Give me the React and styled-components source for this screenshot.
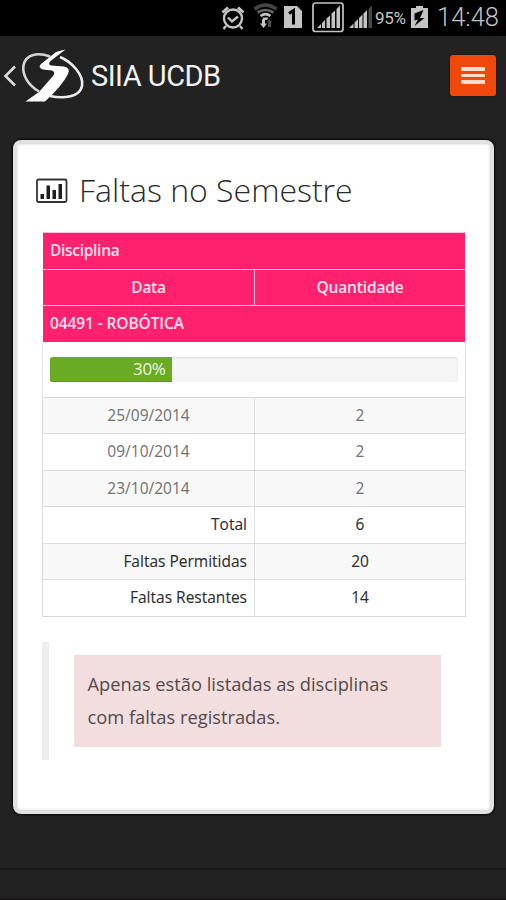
import React from 'react';
import styled, { createGlobalStyle } from 'styled-components';

const Global = createGlobalStyle`
  * { box-sizing: border-box; }
  body { margin: 0; background: #222; font-family: "Open Sans", "Noto Sans", sans-serif; }
`;

const Screen = styled.div`
  width: 506px;
  height: 900px;
  display: flex;
  flex-direction: column;
  overflow: hidden;
  background: #222;
`;

const StatusBar = styled.div`
  height: 36px;
  flex: none;
  background: #000;
  display: flex;
  justify-content: flex-end;
  padding-right: 13px;
  color: #c4c4c4;
  font-family: Roboto, sans-serif;
`;

const StatusIcons = styled.svg`
  width: 154px;
  height: 36px;
  flex: none;
`;

const BatteryLevel = styled.span`
  width: 36px;
  font-size: 17px;
  line-height: 37px;
  letter-spacing: -0.3px;
  white-space: nowrap;
`;

const BatteryIcon = styled.svg`
  width: 18px;
  height: 36px;
  flex: none;
`;

const Clock = styled.span`
  width: 64px;
  padding-left: 8px;
  flex: none;
  font-size: 25.5px;
  line-height: 35px;
  font-weight: 300;
  white-space: nowrap;
`;

const Header = styled.header`
  height: 104px;
  flex: none;
  display: flex;
  align-items: flex-start;
  justify-content: space-between;
  padding: 8px 10px 0 0;
`;

const Brand = styled.div`
  display: flex;
`;

const BrandMark = styled.svg`
  width: 91px;
  height: 64px;
  flex: none;
`;

const BrandName = styled.span`
  color: #f2f2f2;
  font-family: Roboto, sans-serif;
  font-size: 29px;
  line-height: 65px;
  letter-spacing: -0.5px;
  white-space: nowrap;
`;

const MenuButton = styled.button`
  width: 46px;
  height: 41px;
  margin-top: 11px;
  padding: 0;
  border: 0;
  border-radius: 3px;
  background: #f0470a;
  box-shadow: 0 0 2px #07161a;
  display: flex;
  flex-direction: column;
  align-items: center;
  justify-content: center;
  gap: 3px;
`;

const MenuBar = styled.span`
  width: 24px;
  height: 3.4px;
  border-radius: 1px;
  background: #ffdccb;
`;

const Card = styled.main`
  height: 674px;
  flex: none;
  margin: 0 12px 0 13px;
  padding: 26px 24px 0 25px;
  border: 4px solid #e1e1e1;
  border-radius: 8px;
  background: #fff;
  box-shadow: 0 0 2px 1px #060606, inset 0 0 2px 1px #eaeaea;
`;

const Title = styled.h1`
  display: flex;
  align-items: center;
  height: 38px;
  margin: 0 0 24px -6px;
  color: #2b2b2b;
  font-size: 32px;
  font-weight: 300;
  white-space: nowrap;
`;

const ChartIcon = styled.svg`
  width: 32px;
  height: 26px;
  margin: 3px 11px 0 0;
  flex: none;
`;

const Table = styled.div`
  width: 424px;
  border-bottom: 1px solid #d9d9d9;
  font-size: 15.5px;
`;

const HeadRow = styled.div`
  display: grid;
  grid-template-columns: ${p => (p.$split ? '211px 1fr' : '1fr')};
  width: 422px;
  margin-left: 1px;
  height: 36.5px;
  border-top: 1px solid #ffc0d8;
  background: #ff216e;
  color: #ffe3ee;
  line-height: 34px;
  font-weight: 600;
`;

const HeadCell = styled.div`
  padding: 0 7px;
  text-align: ${p => p.$align || 'center'};
  letter-spacing: ${p => p.$spacing || '-0.3px'};
  & + & { border-left: 1px solid #ffc0d8; }
`;

const ProgressRow = styled.div`
  height: 55px;
  padding: 15px 7px 0;
  border: solid #e6e6e6;
  border-width: 0 1px;
`;

const Track = styled.div`
  height: 25px;
  border-radius: 3px;
  background: #f5f5f5;
  box-shadow: inset 0 1px 2px #dedede;
`;

const Fill = styled.div`
  height: 25px;
  padding-right: 7px;
  border-radius: 3px 0 0 3px;
  background: #69ab22;
  box-shadow: inset 0 -1px 0 #5b971b;
  color: #f0f7e4;
  font-size: 17px;
  line-height: 24px;
  letter-spacing: -0.4px;
  text-align: right;
`;

const Row = styled.div`
  display: grid;
  grid-template-columns: 211px 1fr;
  height: 36.6px;
  border: solid #dcdcdc;
  border-width: 1px 1px 0;
  background: ${p => (p.$shaded ? '#f8f8f8' : '#fff')};
  color: ${p => (p.$summary ? '#2e2e2e' : '#707070')};
  line-height: 35px;
`;

const Cell = styled.div`
  padding: 0 7px;
  text-align: ${p => p.$align || 'center'};
  -webkit-text-stroke: ${p => (p.$strong ? '0.1px #2e2e2e' : '0')};
  & + & { border-left: 1px solid #e2e2e2; }
`;

const Quote = styled.blockquote`
  height: 118px;
  margin: 25px 0 0;
  padding: 13px 25px 0 25px;
  border-left: 7px solid #eee;
`;

const Notice = styled.p`
  width: 367px;
  height: 92px;
  margin: 0 0 0 -0.5px;
  padding: 12px 14px;
  background: #f2dede;
  color: #544a4c;
  font-size: 18.3px;
  line-height: 33px;
  white-space: nowrap;
`;

const Footer = styled.footer`
  margin-top: 54px;
  height: 32px;
  border-top: 2px solid #1c1c1c;
  border-bottom: 2px solid #1b1719;
`;

const absences = [
  ['25/09/2014', 2],
  ['09/10/2014', 2],
  ['23/10/2014', 2],
];
const totals = [
  ['Total', 6],
  ['Faltas Permitidas', 20],
  ['Faltas Restantes', 14],
];
const percent = 30;

function StatusArea() {
  return (
    <StatusBar>
      <StatusIcons viewBox="221 0 154 36">
        <g fill="none" stroke="#c4c4c4" strokeWidth="2.4">
          <circle cx="233" cy="18.5" r="9" />
          <path d="M228 17.5l4 4 6-5M226 26l-2.5 3M240 26l2.5 3" />
          <path d="M222.5 12.5l5.5-5M238 7.5l5.5 5" strokeWidth="3" />
        </g>
        <g fill="none">
          <path d="M254.5 9q11-8 22 0" stroke="#454545" strokeWidth="3.5" />
          <path d="M257.5 12.5q8-5 16 0" stroke="#666" strokeWidth="2.7" />
          <path d="M260.5 16q5-3.8 10 0" stroke="#c4c4c4" strokeWidth="2.6" />
        </g>
        <path d="M262.5 17.5h6L267 20h-3z" fill="#c4c4c4" />
        <path d="M260 23.5h2V19h3v4.5h2L263.5 28z" fill="#c4c4c4" />
        <path d="M266.5 22.5l3-3 3 3h-1.5V27h-3v-4.5z" fill="#4d4d4d" />
        <path d="M284 6h13l5 5v17h-18z" fill="#c4c4c4" />
        <path d="M289 13.5l4.500-3v14" fill="none" stroke="#000" strokeWidth="3" />
        <rect x="313" y="3" width="30" height="28.5" rx="2.5" fill="none" stroke="#c4c4c4" strokeWidth="1.7" />
        <g fill="#c4c4c4">
          <path d="M317 28l4-4v4zM322 28v-5l3-3v8zM326.5 28v-9.5l3.500-3V28zM331.5 28V13.500l3.500-3V28zM336.500 28V9l3.500-3.500V28z" />
          <path d="M349 28l4.500-4.500V28zM354.500 28v-5.500l3.500-3.500v9zM359 28V18l3.500-3.500V28zM363.500 28V13.500l3.500-3.500v18z" />
        </g>
        <path d="M368.500 28V9l3.500-3.500V28z" fill="#484848" />
      </StatusIcons>
      <BatteryLevel>95%</BatteryLevel>
      <BatteryIcon viewBox="411 0 18 36">
        <path d="M411 8h5V6h7v2h5v20h-17z" fill="#c4c4c4" />
        <path d="M423.500 10l-9 3.500v7l3.500-1-3.500 6.500 10-8h-4.500z" fill="#000" />
      </BatteryIcon>
      <Clock>14:48</Clock>
    </StatusBar>
  );
}

export default function App() {
  return (
    <Screen>
      <Global />
      <StatusArea />
      <Header>
        <Brand>
          <BrandMark viewBox="0 44 91 64">
            <path d="M15 66.5L5.5 76l9.500 9.500" fill="none" stroke="#ddd" strokeWidth="2.6" />
            <g fill="none" strokeWidth="2.6">
              <path d="M50 56.500C38 52 26 54 23.500 65C22 75 28 85 39 91.500" stroke="#d5d5d5" />
              <path d="M60 57C72 62 84 75 82 86C80 97 64 99 50 96" stroke="#eee" />
            </g>
            <path fill="#fff" d="M56 52Q60 50.500 65.500 49.500L50.500 61Q47.500 64.500 51 65.500L64 66.500Q71 68 68 74Q62 86 45 101.500H25.500L39 92L53 76Q56 72 52 70.500L43 69.500Q37.500 67.500 41 64z" />
          </BrandMark>
          <BrandName>SIIA UCDB</BrandName>
        </Brand>
        <MenuButton aria-label="Menu">
          <MenuBar /><MenuBar /><MenuBar />
        </MenuButton>
      </Header>
      <Card>
        <Title>
          <ChartIcon viewBox="0 0 32 26">
            <rect x="1" y="1.5" width="29.5" height="22.5" rx="1.5" fill="none" stroke="#333" strokeWidth="1.8" />
            <path d="M4.500 16H8v5H4.500zM10.500 7.500H14V21h-3.500zM16.500 12H20v9h-3.500zM22.500 6H26v15h-3.500z" fill="#1f1f1f" />
          </ChartIcon>
          Faltas no Semestre
        </Title>
        <Table>
          <HeadRow><HeadCell $align="left">Disciplina</HeadCell></HeadRow>
          <HeadRow $split>
            <HeadCell>Data</HeadCell>
            <HeadCell $spacing="-0.15px">Quantidade</HeadCell>
          </HeadRow>
          <HeadRow><HeadCell $align="left" $spacing="-0.1px">04491 - ROBÓTICA</HeadCell></HeadRow>
          <ProgressRow>
            <Track>
              <Fill style={{ width: `${percent}%` }}>{percent}%</Fill>
            </Track>
          </ProgressRow>
          {absences.map(([date, count], i) => (
            <Row key={date} $shaded={i % 2 === 0}>
              <Cell>{date}</Cell>
              <Cell>{count}</Cell>
            </Row>
          ))}
          {totals.map(([label, count], i) => (
            <Row key={label} $summary $shaded={i % 2 === 1}>
              <Cell $align="right" $strong>{label}</Cell>
              <Cell $strong>{count}</Cell>
            </Row>
          ))}
        </Table>
        <Quote>
          <Notice>
            Apenas estão listadas as disciplinas<br />com faltas registradas.
          </Notice>
        </Quote>
      </Card>
      <Footer />
    </Screen>
  );
}
